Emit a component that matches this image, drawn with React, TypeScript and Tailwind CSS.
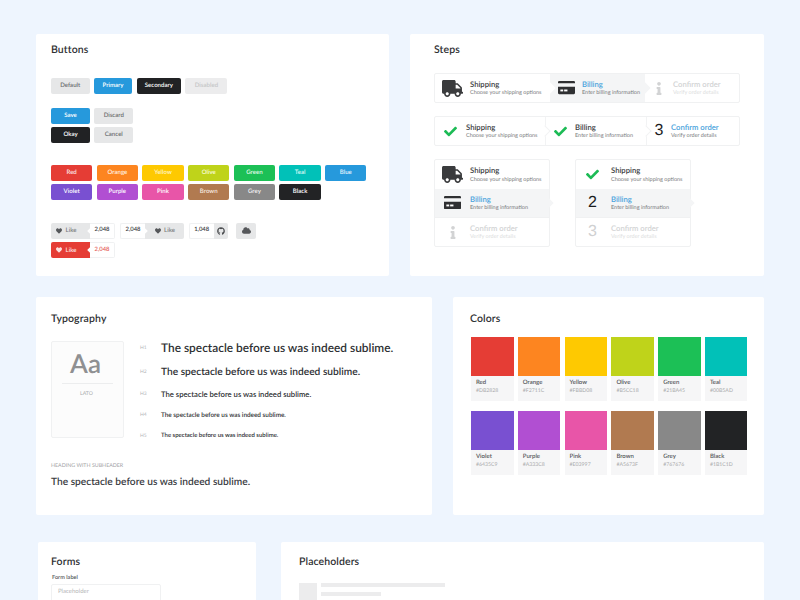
import React from "react";
import { FaTruck, FaCheck, FaInfo, FaHeart, FaGithub, FaCloud } from "react-icons/fa";

const font = { fontFamily: "Lato, 'Noto Sans', sans-serif" };

function CardIcon({ size = 18 }: { size?: number }) {
  return (
    <svg width={size} height={size * 0.78} viewBox="0 0 18 14">
      <path d="M1.2 0H16.8A1.2 1.2 0 0 1 18 1.2V2.4H0V1.2A1.2 1.2 0 0 1 1.2 0Z" fill="#2f3032" />
      <path d="M0 6H18V12.8A1.2 1.2 0 0 1 16.8 14H1.2A1.2 1.2 0 0 1 0 12.8Z" fill="#2f3032" />
      <rect x="2.5" y="9" width="3" height="2" fill="#fff" />
      <rect x="6.5" y="9" width="3.5" height="2" fill="#fff" />
    </svg>
  );
}

function Title({ children }: { children: React.ReactNode }) {
  return <h2 className="text-[10.5px] leading-[14px] font-semibold text-[#2f3134] tracking-[0.1px] translate-y-[0.5px]">{children}</h2>;
}

function Btn({ w, bg, fg, label }: { w: string; bg: string; fg: string; label: string }) {
  return (
    <div className={`${w} ${bg} ${fg} font-semibold h-[16px] rounded-[2px] text-[6.1px] flex items-center justify-center shrink-0`}>
      {label}
    </div>
  );
}

function Notch({ side, color }: { side: "l" | "r"; color: string }) {
  return (
    <span className={`absolute top-[6px] ${side === "l" ? "left-[-2px]" : "right-[-2px]"} w-[4px] h-[4px] rotate-45 ${color}`} />
  );
}

function ButtonsCard() {
  return (
    <section className="w-[353px] h-[242px] bg-white rounded-[2px] pl-[15px] pt-[8px]">
      <Title>Buttons</Title>
      <div className="flex gap-[4.3px] mt-[22px]">
        <Btn w="w-[38.5px]" bg="bg-[#e6e7e8]" fg="text-[#6c6e70]" label="Default" />
        <Btn w="w-[38.5px]" bg="bg-[#2699dc]" fg="text-white" label="Primary" />
        <Btn w="w-[44.5px]" bg="bg-[#212224]" fg="text-white" label="Secondary" />
        <Btn w="w-[42px]" bg="bg-[#ececed]" fg="text-[#c5c6c7]" label="Disabled" />
      </div>
      <div className="flex gap-[4.3px] mt-[13.5px]">
        <Btn w="w-[39px]" bg="bg-[#2699dc]" fg="text-white" label="Save" />
        <Btn w="w-[39px]" bg="bg-[#e6e7e8]" fg="text-[#6c6e70]" label="Discard" />
      </div>
      <div className="flex gap-[4.3px] mt-[3.5px]">
        <Btn w="w-[39px]" bg="bg-[#212224]" fg="text-white" label="Okay" />
        <Btn w="w-[39px]" bg="bg-[#e6e7e8]" fg="text-[#6c6e70]" label="Cancel" />
      </div>
      <div className="grid grid-cols-[repeat(7,41.3px)] gap-x-[4.4px] gap-y-[3.5px] mt-[21.5px]">
        <Btn w="w-full" bg="bg-[#e53d35]" fg="text-[#fbe3e1]" label="Red" />
        <Btn w="w-full" bg="bg-[#fd8520]" fg="text-[#fff1e0]" label="Orange" />
        <Btn w="w-full" bg="bg-[#fec901]" fg="text-[#fff6c8]" label="Yellow" />
        <Btn w="w-full" bg="bg-[#bfd31a]" fg="text-[#f8fbd8]" label="Olive" />
        <Btn w="w-full" bg="bg-[#1cc056]" fg="text-[#e2f9e9]" label="Green" />
        <Btn w="w-full" bg="bg-[#01c1b8]" fg="text-[#ddf9f7]" label="Teal" />
        <Btn w="w-full" bg="bg-[#2699dc]" fg="text-[#e4f3fc]" label="Blue" />
        <Btn w="w-full" bg="bg-[#7950d1]" fg="text-white" label="Violet" />
        <Btn w="w-full" bg="bg-[#b14fd2]" fg="text-white" label="Purple" />
        <Btn w="w-full" bg="bg-[#e855a8]" fg="text-white" label="Pink" />
        <Btn w="w-full" bg="bg-[#b17a50]" fg="text-[#f7ebe0]" label="Brown" />
        <Btn w="w-full" bg="bg-[#888888]" fg="text-[#f2f2f2]" label="Grey" />
        <Btn w="w-full" bg="bg-[#222325]" fg="text-white" label="Black" />
      </div>
      <div className="flex mt-[22.5px] h-[16px]">
        <div className="relative w-[39px] bg-[#e6e7e8] rounded-l-[2px] flex items-center pl-[5px] gap-[3.5px] text-[6.1px] font-semibold text-[#7c7e80]">
          <FaHeart className="text-[#55575a] w-[6px] h-[6px]" /> Like
          <Notch side="r" color="bg-white" />
        </div>
        <div className="w-[25px] border border-l-0 border-[#f0f1f2] rounded-r-[2px] flex items-center justify-center text-[5.9px] font-semibold text-[#3a3c3e]">2,048</div>
        <div className="ml-[5px] w-[25px] border border-r-0 border-[#f0f1f2] rounded-l-[2px] flex items-center justify-center text-[5.9px] font-semibold text-[#3a3c3e]">2,048</div>
        <div className="relative w-[39px] bg-[#e6e7e8] rounded-r-[2px] flex items-center pl-[9.5px] gap-[3.5px] text-[6.1px] font-semibold text-[#7c7e80]">
          <Notch side="l" color="bg-white" />
          <FaHeart className="text-[#55575a] w-[6px] h-[6px]" /> Like
        </div>
        <div className="ml-[4.7px] w-[25px] border border-r-0 border-[#f0f1f2] rounded-l-[2px] flex items-center justify-center text-[5.9px] font-semibold text-[#3a3c3e]">1,048</div>
        <div className="w-[14.5px] bg-[#e6e7e8] rounded-r-[2px] flex items-center justify-center">
          <FaGithub className="text-[#4a4c4f] w-[8px] h-[8px]" />
        </div>
        <div className="ml-[8px] w-[20px] bg-[#e6e7e8] rounded-[2px] flex items-center justify-center">
          <FaCloud className="text-[#55575a] w-[9px] h-[9px]" />
        </div>
      </div>
      <div className="flex mt-[3.7px] h-[16px]">
        <div className="relative w-[39px] bg-[#e53d35] rounded-l-[2px] flex items-center pl-[5px] gap-[3.5px] text-[6.1px] font-semibold text-[#fbe3e1]">
          <FaHeart className="text-[#fbe3e1] w-[6px] h-[6px]" /> Like
          <Notch side="r" color="bg-white" />
        </div>
        <div className="w-[25px] border border-l-0 border-[#f0f1f2] rounded-r-[2px] flex items-center justify-center text-[5.9px] font-semibold text-[#e5605a]">2,048</div>
      </div>
    </section>
  );
}

type State = "done" | "active" | "off" | "plain";

function StepText({ t, s, state }: { t: string; s: string; state: State }) {
  const tc = state === "active" ? "text-[#4aa3dc]" : state === "off" ? "text-[#d2d3d4]" : "text-[#3a3c3e]";
  const sc = state === "off" ? "text-[#dcdddd]" : "text-[#77797b]";
  return (
    <div className="flex flex-col min-w-0">
      <span className={`text-[7.7px] leading-[10px] font-semibold whitespace-nowrap ${tc}`}>{t}</span>
      <span className={`text-[5.5px] leading-[8px] mt-[0.5px] whitespace-nowrap ${sc}`}>{s}</span>
    </div>
  );
}

const Check = () => <FaCheck className="text-[#1cbb55] w-[13px] h-[13px]" />;
const Truck = () => <FaTruck className="text-[#3a3b3d] w-[21px] h-[21px]" />;
const Info = () => <FaInfo className="text-[#d2d3d4] w-[8px] h-[13px]" />;
const Num = ({ n, cls }: { n: number; cls: string }) => (
  <span className={`text-[16px] leading-none ${cls}`} style={{ fontFamily: "'Liberation Sans', sans-serif" }}>{n}</span>
);

function Chevron() {
  return <span className="absolute top-1/2 right-[-4px] -mt-[4px] w-[8px] h-[8px] rotate-45 bg-white border-t border-r border-[#f2f3f4] z-10" />;
}

function VerticalSteps({ numbered }: { numbered?: boolean }) {
  return (
    <div className="w-[115.5px] h-[88px] border border-[#f0f1f2] rounded-[2px] flex flex-col">
      <div className="h-[28.5px] flex items-center">
        <div className={`w-[35px] flex justify-center shrink-0 ${numbered ? "pr-[2px]" : ""}`}>{numbered ? <Check /> : <Truck />}</div>
        <StepText t="Shipping" s="Choose your shipping options" state="plain" />
      </div>
      <div className="relative h-[28.5px] bg-[#f4f5f6] flex items-center">
        <div className={`w-[35px] flex justify-center shrink-0 ${numbered ? "pr-[2px]" : ""}`}>{numbered ? <Num n={2} cls="text-[#1b1c1d]" /> : <CardIcon size={17} />}</div>
        <StepText t="Billing" s="Enter billing information" state="active" />
        <span className="absolute top-1/2 right-[-3.5px] -mt-[4px] w-[8px] h-[8px] rotate-45 bg-[#f4f5f6]" />
      </div>
      <div className="h-[29px] flex items-center border-t border-[#f0f1f2]">
        <div className={`w-[35px] flex justify-center shrink-0 ${numbered ? "pr-[2px]" : ""}`}>{numbered ? <Num n={3} cls="text-[#cfd0d1]" /> : <Info />}</div>
        <StepText t="Confirm order" s="Verify order details" state="off" />
      </div>
    </div>
  );
}

function StepsCard() {
  return (
    <section className="w-[354px] h-[242px] bg-white rounded-[2px] pl-[24px] pt-[8px]">
      <Title>Steps</Title>
      <div className="mt-[17px] w-[306px] h-[30px] border border-[#f0f1f2] rounded-[2px] flex">
        <div className="w-[115px] flex items-center shrink-0">
          <div className="w-[35px] flex justify-center shrink-0"><Truck /></div>
          <StepText t="Shipping" s="Choose your shipping options" state="plain" />
        </div>
        <div className="relative w-[95px] bg-[#f4f5f6] flex items-center shrink-0">
          <div className="w-[32px] flex justify-center shrink-0"><CardIcon size={17} /></div>
          <StepText t="Billing" s="Enter billing information" state="active" />
          <span className="absolute top-1/2 right-[-3.5px] -mt-[4px] w-[8px] h-[8px] rotate-45 bg-[#f4f5f6]" />
          <span className="absolute top-1/2 left-[-4px] -mt-[4px] w-[8px] h-[8px] rotate-45 bg-white" />
        </div>
        <div className="flex items-center">
          <div className="w-[28px] flex justify-center shrink-0"><Info /></div>
          <StepText t="Confirm order" s="Verify order details" state="off" />
        </div>
      </div>
      <div className="mt-[13px] w-[306px] h-[30px] border border-[#f0f1f2] rounded-[2px] flex">
        <div className="relative w-[111px] flex items-center shrink-0 border-r border-[#f2f3f4]">
          <div className="w-[31px] flex justify-center shrink-0"><Check /></div>
          <StepText t="Shipping" s="Choose your shipping options" state="plain" />
          <Chevron />
        </div>
        <div className="relative w-[101px] flex items-center shrink-0 border-r border-[#f2f3f4]">
          <div className="w-[29px] flex justify-center shrink-0"><Check /></div>
          <StepText t="Billing" s="Enter billing information" state="plain" />
          <Chevron />
        </div>
        <div className="flex items-center">
          <div className="w-[24px] flex justify-center shrink-0"><Num n={3} cls="text-[#1b1c1d]" /></div>
          <StepText t="Confirm order" s="Verify order details" state="active" />
        </div>
      </div>
      <div className="mt-[13px] flex gap-[25.5px]">
        <VerticalSteps />
        <VerticalSteps numbered />
      </div>
    </section>
  );
}

const heads = [
  { l: "H1", size: "text-[11.9px]", h: "h-[24.5px]" },
  { l: "H2", size: "text-[10.2px]", h: "h-[23.5px]" },
  { l: "H3", size: "text-[7.7px]", h: "h-[21.5px]" },
  { l: "H4", size: "text-[6.4px]", h: "h-[20.5px]" },
  { l: "H5", size: "text-[6px]", h: "h-[20.5px]" },
];
const sentence = "The spectacle before us was indeed sublime.";

function TypographyCard() {
  return (
    <section className="w-[396px] h-[218px] bg-white rounded-[2px] pl-[15px] pt-[14px]">
      <Title>Typography</Title>
      <div className="flex mt-[16px]">
        <div className="w-[73px] h-[97px] bg-[#fcfcfc] border border-[#f0f1f2] rounded-[2px] flex flex-col items-center shrink-0 px-[10px]">
          <span className="text-[26px] leading-[30px] mt-[5.5px] font-semibold text-[#8f9092] -translate-x-[2px]">Aa</span>
          <span className="w-full border-t border-[#ecedee] mt-[5.5px]" />
          <span className="text-[5.2px] leading-[6px] mt-[7px] text-[#a9aaac] -translate-x-[1px]">LATO</span>
        </div>
        <div className="flex flex-col ml-[16px] -mt-[5px]">
          {heads.map((h) => (
            <div key={h.l} className={`flex items-center ${h.h}`}>
              <span className="w-[21px] text-[5px] text-[#b5b6b8] shrink-0">{h.l}</span>
              <span className={`${h.size} font-semibold text-[#2e3033] whitespace-nowrap leading-none`}>{sentence}</span>
            </div>
          ))}
        </div>
      </div>
      <div className="text-[5.3px] leading-[6px] text-[#a3a4a6] mt-[16px]">HEADING WITH SUBHEADER</div>
      <div className="text-[10.2px] leading-[14px] font-semibold text-[#3a3c3f] mt-[6px]">{sentence}</div>
    </section>
  );
}

const colors = [
  ["Red", "#DB2828", "bg-[#e53d35]"],
  ["Orange", "#F2711C", "bg-[#fd8520]"],
  ["Yellow", "#FBBD08", "bg-[#fec901]"],
  ["Olive", "#B5CC18", "bg-[#bfd31a]"],
  ["Green", "#21BA45", "bg-[#1cc056]"],
  ["Teal", "#00B5AD", "bg-[#01c1b8]"],
  ["Violet", "#6435C9", "bg-[#7950d1]"],
  ["Purple", "#A333C8", "bg-[#b14fd2]"],
  ["Pink", "#E03997", "bg-[#e855a8]"],
  ["Brown", "#A5673F", "bg-[#b17a50]"],
  ["Grey", "#767676", "bg-[#888888]"],
  ["Black", "#1B1C1D", "bg-[#222325]"],
];

function ColorsCard() {
  return (
    <section className="w-[311px] h-[218px] bg-white rounded-[2px] pl-[17px] pt-[14px]">
      <Title>Colors</Title>
      <div className="grid grid-cols-[repeat(6,42.5px)] gap-x-[4.3px] gap-y-[10px] mt-[12px] ml-[1px]">
        {colors.map(([n, h, c]) => (
          <div key={n} className="h-[64px] bg-[#f6f6f7] flex flex-col">
            <div className={`h-[38.5px] ${c}`} />
            <span className="text-[6px] leading-[8px] font-semibold text-[#55575a] pl-[5px] mt-[3px]">{n}</span>
            <span className="text-[5.2px] leading-[7px] text-[#a9aaac] pl-[5px] mt-[1px]">{h}</span>
          </div>
        ))}
      </div>
    </section>
  );
}

export default function App() {
  return (
    <div className="w-[800px] h-[600px] overflow-hidden bg-[#eef5fe] pt-[34px] [text-rendering:geometricPrecision]" style={font}>
      <div className="flex gap-[21px] pl-[36px]">
        <ButtonsCard />
        <StepsCard />
      </div>
      <div className="flex gap-[21px] pl-[36px] mt-[21px]">
        <TypographyCard />
        <ColorsCard />
      </div>
      <div className="flex gap-[25px] pl-[38px] mt-[27px]">
        <section className="w-[218px] h-[100px] bg-white rounded-[2px] pl-[13px] pt-[12px]">
          <Title>Forms</Title>
          <div className="text-[5.6px] leading-[7px] font-semibold text-[#55575a] mt-[6px] ml-[1px]">Form label</div>
          <div className="w-[110px] h-[24px] border border-[#f0f1f2] rounded-[2px] mt-[3px] pl-[6px] pt-[3px] text-[6px] leading-[8px] text-[#b5b6b8]">Placeholder</div>
        </section>
        <section className="w-[483px] h-[100px] bg-white rounded-[2px] pl-[18px] pt-[12px]">
          <Title>Placeholders</Title>
          <div className="flex mt-[15px]">
            <div className="w-[18px] h-[30px] bg-[#ececed] shrink-0" />
            <div className="flex flex-col ml-[4px] gap-[5px]">
              <div className="w-[124px] h-[4px] bg-[#ececed]" />
              <div className="w-[60px] h-[3.5px] bg-[#ececed]" />
            </div>
          </div>
        </section>
      </div>
    </div>
  );
}
